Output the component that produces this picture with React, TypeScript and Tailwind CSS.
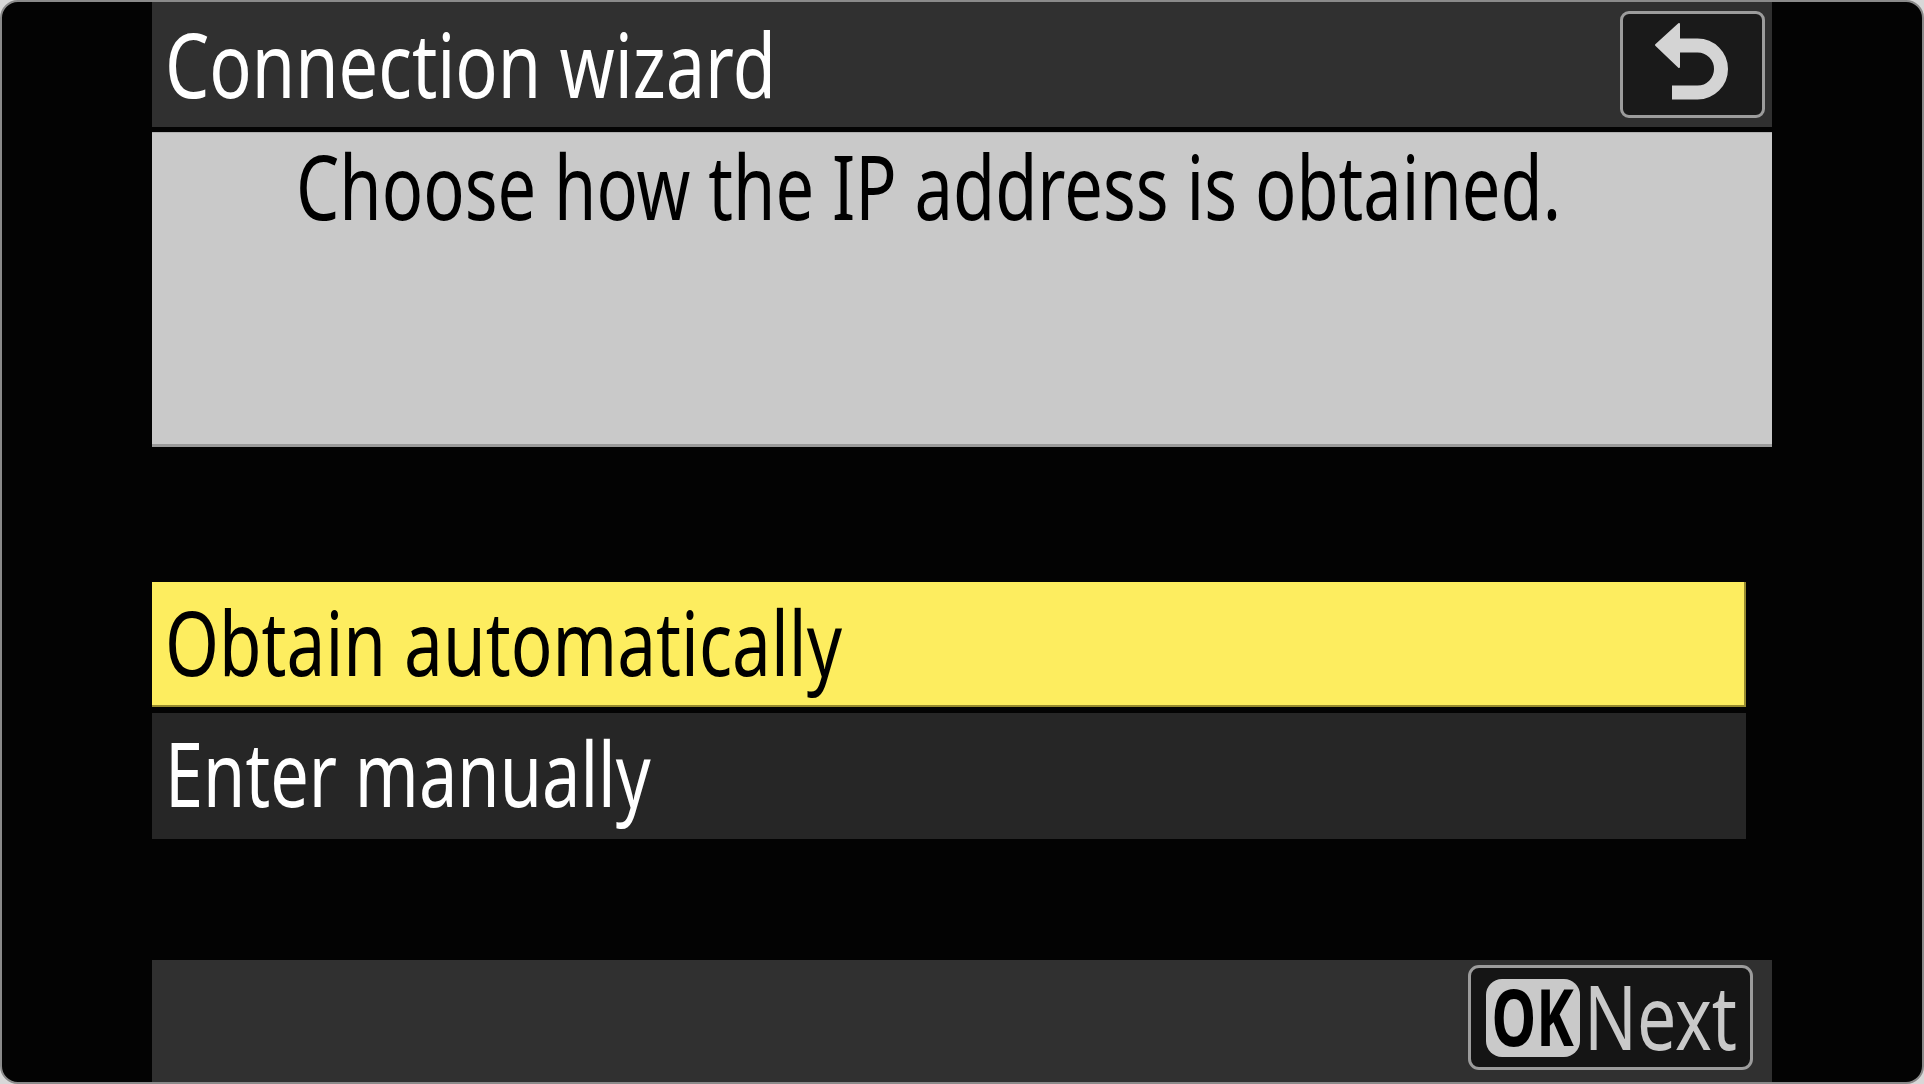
export default function App() {
  const base =
    "block whitespace-nowrap font-['Noto_Sans',sans-serif] text-[90px] leading-none origin-left";
  return (
    <div className="w-[1924px] h-[1084px] bg-[#d8d8d8]">
      <div className="w-full h-full rounded-[18px] border-2 border-[#8a8a8a] bg-[#030303] overflow-hidden flex flex-col pl-[150px]">
        {/* Header */}
        <div className="w-[1620px] h-[125px] shrink-0 bg-[#303030] flex items-center justify-between pl-[13px] pr-[7px]">
          <span className={`${base} scale-x-[0.78] text-white -translate-y-[2px]`}>Connection wizard</span>
          <div className="w-[145px] h-[107px] rounded-[9px] border-[3px] border-[#9c9c9c] bg-[#1a1a1a]">
            <svg viewBox="0 0 139 101" className="w-full h-full block">
              <path
                d="M49 31.5 H74.5 A23.5 23.5 0 0 1 74.5 78.5 H49"
                fill="none"
                stroke="#d4d4d4"
                strokeWidth="14"
              />
              <polygon
                points="33,31 56,10 56,53"
                fill="#d4d4d4"
                stroke="#d4d4d4"
                strokeWidth="2"
                strokeLinejoin="round"
              />
            </svg>
          </div>
        </div>

        {/* Gap */}
        <div className="h-[5px] shrink-0" />

        {/* Message panel */}
        <div className="w-[1620px] h-[315px] shrink-0 bg-[#c9c9c9] border-t border-[#b0b0b0] border-b-[3px] border-b-[#9a9a9a] pl-[144px] pt-[7px]">
          <span className={`${base} scale-x-[0.762] text-black`}>Choose how the IP address is obtained.</span>
        </div>

        <div className="h-[135px] shrink-0" />

        {/* Options */}
        <div className="w-[1594px] h-[125px] shrink-0 bg-[#fded5f] border-r-2 border-b-2 border-[#968a2e] flex items-center pl-[13px]">
          <span className={`${base} scale-x-[0.769] text-black -translate-y-[3px]`}>Obtain automatically</span>
        </div>
        <div className="h-[6px] shrink-0" />
        <div className="w-[1594px] h-[126px] shrink-0 bg-[#262626] flex items-center pl-[13px]">
          <span className={`${base} scale-x-[0.761] text-white -translate-y-[4px]`}>Enter manually</span>
        </div>

        <div className="h-[121px] shrink-0" />

        {/* Footer */}
        <div className="w-[1620px] h-[122px] shrink-0 bg-[#303030] flex justify-end items-start pt-[5px] pr-[19px]">
          <div className="w-[285px] h-[105px] rounded-[11px] border-[3px] border-[#9c9c9c] bg-[#151515] flex items-center pl-[15px]">
            <div className="w-[94px] h-[78px] shrink-0 rounded-[16px] bg-[#c9c9c9] flex items-center justify-center overflow-visible">
              <span className="block whitespace-nowrap font-['Noto_Sans',sans-serif] font-bold text-[78px] leading-none text-black origin-center scale-x-[0.725] -translate-y-[2px]">
                OK
              </span>
            </div>
            <span className={`${base} scale-x-[0.775] text-[#c9c9c9] ml-[4px] -translate-y-[3px]`}>Next</span>
          </div>
        </div>
      </div>
    </div>
  );
}
